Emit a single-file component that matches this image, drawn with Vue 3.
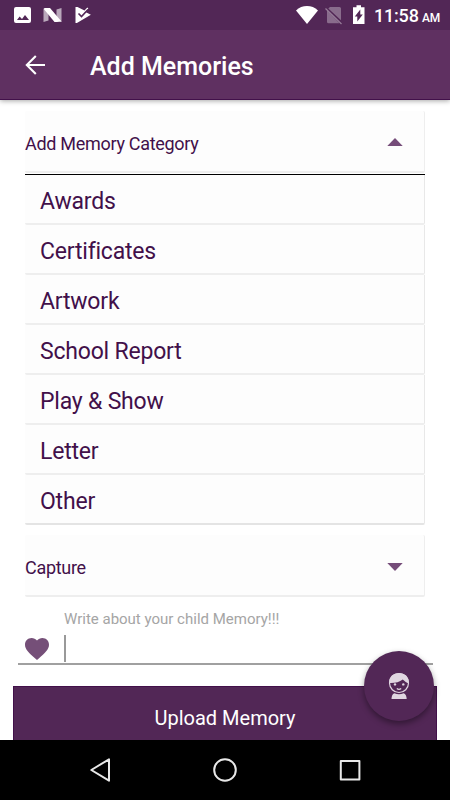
<script setup>
import { ref } from 'vue'

const categories = [
  'Awards',
  'Certificates',
  'Artwork',
  'School Report',
  'Play & Show',
  'Letter',
  'Other'
]

const opened = ref(true)
</script>

<template>
  <div class="screen">
    <header class="header">
      <div class="status-bar">
        <svg class="status-left" width="95" height="30" viewBox="0 0 95 30">
          <path fill="#fff" fill-rule="evenodd" d="M16 7h13q2 0 2 2v12q0 2-2 2H16q-2 0-2-2V9q0-2 2-2zM17 20h12l-4-5-3 4-2.400-2.500z" />
          <path fill="#fff" fill-opacity=".6" d="M43.500 8.500l5 2v10l-5 1.500zM56.500 9.500l5-1.500v14l-5-2z" />
          <path fill="#fff" d="M44.500 8H50l11.500 13.500-4.500.5h-2.500L43.800 9z" />
          <path fill="#fff" d="M75.500 7h2l7 3.500L87.300 7.500l1 1-2.400 3.700 5 2.500-14 8.300h-1.400z" />
          <path fill="none" stroke="#522756" stroke-width="1.600" d="M78.500 13.500l3 3 6.500-7" />
        </svg>
        <svg class="status-right" width="75" height="30" viewBox="0 0 75 30">
          <path fill="#fff" d="M0 10.500C6 4.600 16 4.600 22 10.500L11 24z" />
          <path fill="#fff" fill-opacity=".32" d="M34 7h9.500q1.500 0 1.500 1.500v11.800L32.300 8.500zM31 10.800l12.500 12.400H32.500q-1.500 0-1.500-1.500z" />
          <path fill="none" stroke="#fff" stroke-opacity=".4" stroke-width="1.200" d="M29.500 8.500L45.500 24" />
          <path fill="#fff" d="M60.500 5.200h4.500v2h3.500v16.800H57V7.200h3.500z" />
          <path fill="#522756" d="M64.300 9.500v5h2.500L61.300 21.500v-5h-2.500z" />
        </svg>
        <span class="clock">11:58 <small>AM</small></span>
      </div>
      <div class="toolbar">
        <svg class="back" width="20" height="20" viewBox="0 0 20 20">
          <path fill="none" stroke="#fff" stroke-width="2.100" d="M20 10H2M10.800 .9L1.800 10l9 9.100" />
        </svg>
        <h1>Add Memories</h1>
      </div>
    </header>

    <main class="content">
      <div class="card select" :class="{ opened }" @click="opened = !opened">
        <span>Add Memory Category</span>
        <svg width="16" height="8" viewBox="0 0 16 8">
          <path fill="#754c79" :d="opened ? 'M.3 8L8 0l7.700 8z' : 'M.3 0L8 8l7.700-8z'" />
        </svg>
      </div>
      <ul v-if="opened" class="categories">
        <li v-for="category in categories" :key="category">{{ category }}</li>
      </ul>

      <div class="card select capture">
        <span>Capture</span>
        <svg width="16" height="8" viewBox="0 0 16 8">
          <path fill="#754c79" d="M.3 0L8 8l7.700-8z" />
        </svg>
      </div>

      <div class="field">
        <label>Write about your child Memory!!!</label>
        <div class="field-row">
          <svg class="heart" width="24" height="22" viewBox="0 0 24 22">
            <path fill="#754f78" d="M12 22L10.260 20.430C4.080 14.860 0 11.190 0 6.650C0 2.970 2.900.1 6.600.1c2.090 0 4.100.97 5.400 2.480C13.310 1.070 15.310.1 17.400.1 21.100.1 24 2.970 24 6.650c0 4.540-4.080 8.210-10.260 13.790z" />
          </svg>
          <span class="caret"></span>
        </div>
      </div>

      <button class="upload">Upload Memory</button>
    </main>

    <button class="fab">
      <svg width="22" height="28" viewBox="0 0 22 28">
        <circle cx="11" cy="11" r="9.500" fill="none" stroke="#e0d6e1" stroke-width="1.200" />
        <path fill="#e0d6e1" d="M1 11C1 4.500 5.500 1 11 1s10 3.500 10 10h-1.500Q18 10.500 14.800 7.500 9.500 11.500 1 11z" />
        <circle cx="7" cy="12.400" r="1.200" fill="#e0d6e1" />
        <circle cx="15.300" cy="12.400" r="1.200" fill="#e0d6e1" />
        <path fill="none" stroke="#e0d6e1" stroke-width="1.200" d="M8.800 16.500q2.200 1.800 4.400 0" />
        <path fill="#e0d6e1" d="M6.300 21.200q4.700 2.100 9.400 0 2.800 1.300 3 5.800H3.500q.1-4.500 2.800-5.800z" />
      </svg>
    </button>

    <nav class="nav-bar">
      <svg width="270" height="26" viewBox="0 0 270 26" fill="none" stroke="#e8e8e8" stroke-width="2" stroke-linejoin="round">
        <path d="M19 2.300v21.400L1.300 13z" />
        <circle cx="135" cy="13" r="10.800" />
        <rect x="250.800" y="4" width="18.600" height="18.600" />
      </svg>
    </nav>
  </div>
</template>

<style>
body {
  margin: 0;
}
</style>

<style scoped>
.screen {
  position: relative;
  display: flex;
  flex-direction: column;
  width: 450px;
  height: 800px;
  overflow: hidden;
  background: #fff;
  font-family: Roboto, "Liberation Sans", sans-serif;
}

svg {
  display: block;
  flex: none;
  overflow: visible;
}

.header {
  height: 100px;
  box-sizing: border-box;
  border-bottom: 1px solid #42104a;
  background: #5f3061;
  box-shadow: 0 1px 5px rgba(0, 0, 0, 0.35);
}

.status-bar {
  display: flex;
  height: 30px;
  background: #522756;
  color: #fff;
}

.status-right {
  margin-left: 201px;
}

.clock {
  margin-left: 3px;
  line-height: 32px;
  font-size: 18px;
  font-weight: 500;
  letter-spacing: -0.200px;
  white-space: nowrap;
}

.clock small {
  margin-left: -1px;
  font-size: 12px;
}

.toolbar {
  display: flex;
  align-items: center;
  height: 70px;
  padding-left: 25px;
}

h1 {
  margin: 4px 0 0 45px;
  color: #fff;
  font-size: 25px;
  font-weight: 500;
  line-height: 30px;
}

.content {
  flex: 1;
  display: flex;
  flex-direction: column;
  min-height: 0;
  padding-top: 11px;
}

.content > * {
  flex: none;
}

.card {
  height: 62px;
  margin: 0 25px;
  box-sizing: border-box;
  border-right: 1px solid #eee;
  border-bottom: 2px solid #eee;
  border-radius: 2px;
  background: #fdfdfd;
}

.select {
  display: flex;
  align-items: center;
  justify-content: space-between;
  padding-right: 21px;
  color: #42104a;
  font-size: 18px;
  letter-spacing: -0.300px;
}

.select span {
  padding-top: 4px;
}

.select svg {
  margin-top: 2px;
}

.categories {
  margin: 1px 25px 0;
  padding: 0;
  border-top: 1px solid #000;
  list-style: none;
}

.categories li {
  height: 50px;
  box-sizing: border-box;
  padding-left: 15px;
  border-right: 1px solid #e8e8e8;
  border-bottom: 2px solid #eee;
  border-radius: 0 0 2px 2px;
  background: #fdfdfd;
  color: #42104a;
  font-size: 23px;
  line-height: 53px;
  letter-spacing: -0.200px;
}

.categories li:last-child {
  border-bottom-color: #e4e4e4;
}

.capture {
  margin-top: 10px;
}

.capture svg {
  margin-top: 4px;
}

.field {
  margin: 11px 17px 0 18px;
  border-bottom: 2px solid #a0a0a0;
}

.field label {
  display: block;
  padding-left: 46px;
  color: #a5a5a5;
  font-size: 15px;
  line-height: 22px;
}

.field-row {
  display: flex;
  align-items: center;
  height: 33px;
  padding-left: 7px;
}

.heart {
  margin-top: 5px;
}

.caret {
  width: 2px;
  height: 27px;
  margin: 4px 0 0 15px;
  background: #999;
}

.upload {
  height: 56px;
  margin: 21px 13px 0;
  padding: 7px 0 0;
  border: 1px solid #42104a;
  background: #522756;
  color: #fff;
  font-family: inherit;
  font-size: 20px;
}

/* floating over the upload button */
.fab {
  position: absolute;
  right: 16px;
  bottom: 79px;
  display: flex;
  align-items: center;
  justify-content: center;
  width: 70px;
  height: 70px;
  padding: 0;
  border: none;
  border-radius: 50%;
  background: #522756;
  box-shadow: 0 3px 6px rgba(0, 0, 0, 0.4);
}

.nav-bar {
  position: relative;
  display: flex;
  align-items: center;
  justify-content: center;
  height: 60px;
  flex: none;
  background: #000;
}
</style>
